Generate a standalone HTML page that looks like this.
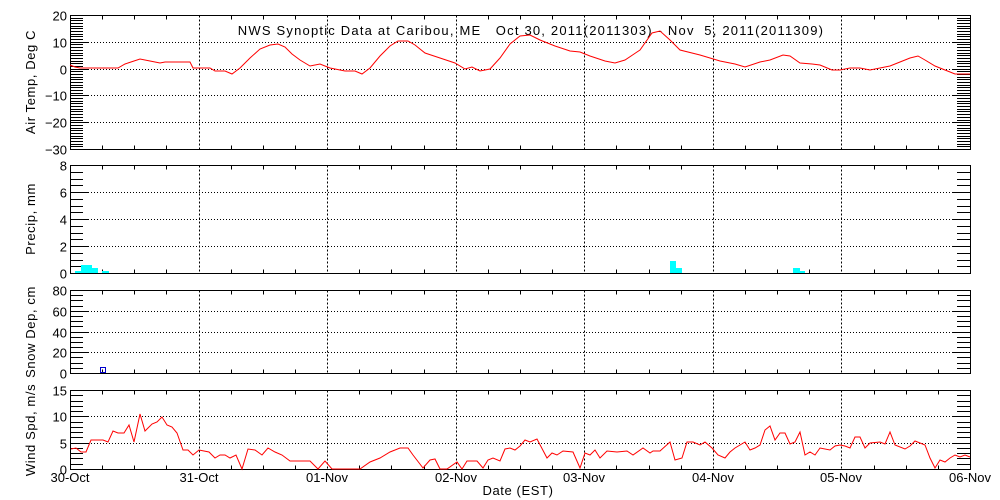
<!DOCTYPE html>
<html><head><meta charset="utf-8"><style>
body{margin:0;background:#fff;width:1000px;height:500px;overflow:hidden}
svg{display:block;font-family:"Liberation Sans",sans-serif;font-size:13px}
</style></head><body>
<svg id="s" width="1000" height="500" viewBox="0 0 1000 500">
<text x="531" y="35" text-anchor="middle" letter-spacing="1.2" xml:space="preserve">NWS Synoptic Data at Caribou, ME   Oct 30, 2011(2011303) - Nov  5, 2011(2011309)</text>
<g id="g"></g>
<polyline fill="none" stroke="#f00" stroke-width="1" points="70,65 75,67 80,68 118,68 125,64 140,59 150,61 160,63 165,62 190,62 193,68 210,68 215,71 225,71 232,74 240,68 250,58 260,49 270,45 278,44 285,47 292,54 300,60 310,66 320,64 330,68 345,71 355,71 362,74 370,68 380,56 390,46 398,41 408,41 415,45 425,53 440,58 455,63 465,69 472,67 480,71 490,69 500,58 510,44 520,36 530,35 540,40 555,46 570,51 580,52 590,56 605,61 615,63 625,60 640,50 652,33 660,31 670,40 680,50 700,55 720,61 735,64 745,67 760,62 770,60 783,55 790,56 800,63 812,64 820,65 832,70 840,70 850,68 860,68 870,70 880,68 890,66 900,62 910,58 918,56 925,60 935,66 945,70 955,74 970,74"/>
<polyline fill="none" stroke="#f00" stroke-width="1" points="71,449 76,448 81,452 86,452 91,440 103,440 108,442 113,431 118,433 124,433 129,425 134,442 140,414 145,431 152,424 157,422 162,417 167,425 172,427 177,433 183,450 188,450 193,455 199,450 204,451 209,452 215,458 220,455 225,455 230,458 236,455 242,469 248,449 255,450 262,455 268,448 275,452 282,455 290,461 300,461 310,461 318,469 325,461 332,469 340,469 360,469 370,462 380,458 390,452 400,448 408,448 413,455 423,468 430,460 435,459 440,469 447,469 457,462 462,469 467,461 477,461 483,468 488,460 493,458 500,461 505,449 510,448 515,450 520,446 525,440 530,442 537,439 547,458 552,453 557,455 563,451 573,452 580,468 585,453 590,455 595,450 600,458 607,451 617,452 627,451 633,455 643,448 650,453 653,451 660,451 670,442 675,460 682,458 687,442 693,442 700,445 705,442 712,448 718,455 725,458 730,452 735,448 740,445 745,442 750,450 755,448 760,445 765,430 770,426 775,440 780,433 785,433 790,444 795,442 800,432 805,455 810,452 815,455 820,448 830,450 835,446 840,445 845,446 850,448 855,437 860,437 865,448 870,443 880,442 885,444 890,432 895,445 905,449 910,446 915,441 920,443 925,445 930,458 935,468 940,460 945,462 950,458 955,455 960,457 965,455 970,457"/>
<g fill="#00ffff">
<rect x="75" y="271" width="6" height="2"/><rect x="81" y="265" width="11" height="8"/><rect x="92" y="268" width="6" height="5"/><rect x="102" y="271" width="7" height="2"/>
<rect x="670" y="261" width="6" height="12"/><rect x="676" y="268" width="6" height="5"/>
<rect x="793" y="268" width="7" height="5"/><rect x="800" y="271" width="5" height="2"/>
</g>
<rect x="100.5" y="367.5" width="5" height="5" fill="none" stroke="#00c" stroke-width="1"/>
<g text-anchor="middle" letter-spacing="0.6">
<text transform="translate(35,82) rotate(-90)">Air Temp, Deg C</text>
<text transform="translate(35,219) rotate(-90)">Precip, mm</text>
<text transform="translate(35,332) rotate(-90)">Snow Dep, cm</text>
<text transform="translate(35,430) rotate(-90)">Wind Spd, m/s</text>
<text x="518" y="495">Date (EST)</text>
</g>
</svg>
<script>
var g=document.getElementById('g'),h='';
function L(x1,y1,x2,y2,st){h+='<line x1="'+x1+'" y1="'+y1+'" x2="'+x2+'" y2="'+y2+'" stroke="#000" stroke-width="1"'+(st||'')+'/>';}
function T(x,y,t,a){h+='<text x="'+x+'" y="'+y+'" text-anchor="'+(a||'end')+'">'+t+'</text>';}
var X0=70,X1=970,day=900/7;
var P=[{t:15,b:149,min:-30,max:20,maj:10,mn:1},{t:165,b:273,min:0,max:8,maj:2,mn:0.5},{t:290,b:373,min:0,max:80,maj:20,mn:5},{t:390,b:469,min:0,max:15,maj:5,mn:1}];
P.forEach(function(p,i){
 var t=p.t+.5,b=p.b+.5;
 h+='<rect x="70.5" y="'+t+'" width="900" height="'+(p.b-p.t)+'" fill="none" stroke="#000"/>';
 var sc=(p.b-p.t)/(p.max-p.min);
 for(var v=p.min;v<=p.max+1e-6;v+=p.mn){var y=Math.round(p.b-(v-p.min)*sc)+.5;L(70,y,83,y);L(957,y,970,y);}
 for(var v=p.min;v<=p.max+1e-6;v+=p.maj){var y=Math.round(p.b-(v-p.min)*sc)+.5;L(70,y,88,y);L(952,y,970,y);
  if(v>p.min&&v<p.max)L(88,y,952,y,' stroke-dasharray="1 2"');
  T(67,y+5,v<0?'\u2212'+(-v):v);}
 for(var k=1;k<28;k++){var x=Math.round(X0+k*day/4)+.5;if(k%4==0){L(x,t,x,b,' stroke-dasharray="2 2"');}else{L(x,t,x,t+4);L(x,b-4,x,b);}}
});
var d=['30-Oct','31-Oct','01-Nov','02-Nov','03-Nov','04-Nov','05-Nov','06-Nov'];
d.forEach(function(s,k){T(Math.round(X0+k*day),482,s,'middle');});
g.innerHTML=h;
</script>
</body></html>
